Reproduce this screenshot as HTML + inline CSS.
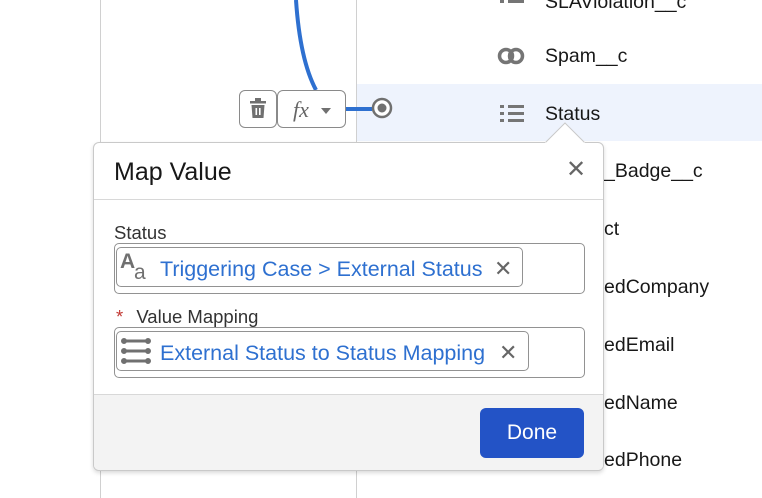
<!DOCTYPE html>
<html><head><style>
*{box-sizing:border-box;margin:0;padding:0}
body{width:762px;height:498px;overflow:hidden;background:#fff;font-family:"Liberation Sans",sans-serif;color:#181818;position:relative}
.a{position:absolute}
.t{position:absolute;left:545px;font-size:19.5px;line-height:20px}
</style></head><body>
<div class="a" style="left:100px;top:0;width:1px;height:498px;background:#d0d0d0"></div>
<div class="a" style="left:356px;top:0;width:1px;height:498px;background:#d0d0d0"></div>
<div class="a" style="left:357px;top:84px;width:405px;height:57px;background:#eef3fd"></div>
<svg class="a" style="left:0;top:0" width="762" height="498">
<path d="M296 0 Q300 60 316 90" stroke="#2e70d0" stroke-width="4" fill="none"/>
<line x1="345" y1="109" x2="372" y2="109" stroke="#2e70d0" stroke-width="4"/>
<circle cx="382" cy="108" r="9" stroke="#707070" stroke-width="2.5" fill="#fff"/>
<circle cx="382" cy="108" r="4.5" fill="#707070"/>
<g fill="#757575"><rect x="500" y="0" width="4" height="3"/><rect x="508" y="0" width="16" height="3"/>
<rect x="500" y="105" width="4" height="3"/><rect x="508" y="105" width="16" height="3"/>
<rect x="500" y="112" width="4" height="3"/><rect x="508" y="112" width="16" height="3"/>
<rect x="500" y="119" width="4" height="3"/><rect x="508" y="119" width="16" height="3"/></g>
<circle cx="506" cy="56" r="6.5" stroke="#757575" stroke-width="3.5" fill="none"/>
<circle cx="516" cy="56" r="6.5" stroke="#757575" stroke-width="3.5" fill="none"/>
</svg>
<div class="t" style="top:-8px">SLAViolation__c</div>
<div class="t" style="top:46px">Spam__c</div>
<div class="t" style="top:104px">Status</div>
<div class="t" style="top:161px;left:604px">_Badge__c</div>
<div class="t" style="top:219px;left:604px">ct</div>
<div class="t" style="top:277px;left:604px">edCompany</div>
<div class="t" style="top:335px;left:604px">edEmail</div>
<div class="t" style="top:393px;left:604px">edName</div>
<div class="t" style="top:450px;left:604px">edPhone</div>
<div class="a" style="left:239px;top:90px;width:38px;height:38px;border:1px solid #8a8a8a;border-radius:6px;background:#fff"></div>
<svg class="a" style="left:248px;top:98px" width="20" height="22"><rect x="2" y="3" width="16" height="2.5" fill="#707070"/><rect x="7" y="0" width="6" height="3" fill="#707070"/><path d="M3.5 7h13l-1 13h-11z" fill="#707070"/><rect x="7.5" y="10" width="1.6" height="7" fill="#fff"/><rect x="11" y="10" width="1.6" height="7" fill="#fff"/></svg>
<div class="a" style="left:277px;top:90px;width:69px;height:38px;border:1px solid #8a8a8a;border-radius:6px;background:#fff;font-family:'Liberation Serif',serif;font-style:italic;font-size:22px;color:#666;padding:6px 0 0 15px">fx</div>
<svg class="a" style="left:321px;top:108px" width="10" height="6"><path d="M0 0h10L5 6z" fill="#707070"/></svg>
<div class="a" style="left:93px;top:142px;width:511px;height:329px;border:1px solid #c9c9c9;border-radius:6px;background:#fff;box-shadow:0 2px 4px rgba(0,0,0,.15);overflow:hidden">
 <div style="height:57px;border-bottom:1px solid #d8d8d8;font-size:25px;padding:15px 0 0 20px">Map Value</div>
 <div class="a" style="left:20px;top:79px;font-size:18.5px;color:#333">Status</div>
 <div class="a" style="left:20px;top:100px;width:471px;height:51px;border:1px solid #929292;border-radius:5px"></div>
 <div class="a" style="left:22px;top:104px;width:407px;height:40px;border:1px solid #929292;border-radius:5px;color:#2e70d0;font-size:21.5px;padding:9px 0 0 43px;white-space:nowrap">Triggering Case &gt; External Status</div>
 <div class="a" style="left:26px;top:107px;font-size:21px;color:#707070;font-weight:bold">A</div>
 <div class="a" style="left:40px;top:118px;font-size:21px;color:#707070">a</div>
 <div class="a" style="left:400px;top:113px;font-size:22px;color:#666">✕</div>
 <div class="a" style="left:22px;top:163px;font-size:18.5px;color:#333"><span style="color:#c23934;margin-right:8px">*</span> Value Mapping</div>
 <div class="a" style="left:20px;top:184px;width:471px;height:51px;border:1px solid #929292;border-radius:5px"></div>
 <div class="a" style="left:22px;top:188px;width:413px;height:40px;border:1px solid #929292;border-radius:5px;color:#2e70d0;font-size:21.5px;padding:9px 0 0 43px;white-space:nowrap">External Status to Status Mapping</div>
 <svg class="a" style="left:27px;top:195px" width="30" height="26"><g stroke="#707070" stroke-width="3" fill="#707070"><line x1="3" y1="3" x2="27" y2="3"/><line x1="3" y1="13" x2="27" y2="13"/><line x1="3" y1="23" x2="27" y2="23"/><circle cx="3" cy="3" r="1.5"/><circle cx="27" cy="3" r="1.5"/><circle cx="3" cy="13" r="1.5"/><circle cx="27" cy="13" r="1.5"/><circle cx="3" cy="23" r="1.5"/><circle cx="27" cy="23" r="1.5"/></g></svg>
 <div class="a" style="left:405px;top:197px;font-size:22px;color:#666">✕</div>
 <div class="a" style="left:0;top:251px;width:511px;height:78px;background:#f3f3f3;border-top:1px solid #d8d8d8"></div>
 <div class="a" style="left:386px;top:265px;width:104px;height:50px;background:#2353c6;border-radius:6px;color:#fff;font-size:21px;text-align:center;line-height:50px">Done</div>
</div>
<div class="a" style="left:566px;top:155px;font-size:24px;color:#666">✕</div>
<svg class="a" style="left:545px;top:122px" width="40" height="22"><path d="M0 21 L20 1 L40 21" fill="#fff" stroke="#c9c9c9" stroke-width="1"/><rect x="0" y="20.5" width="40" height="2" fill="#fff"/></svg>
</body></html>
